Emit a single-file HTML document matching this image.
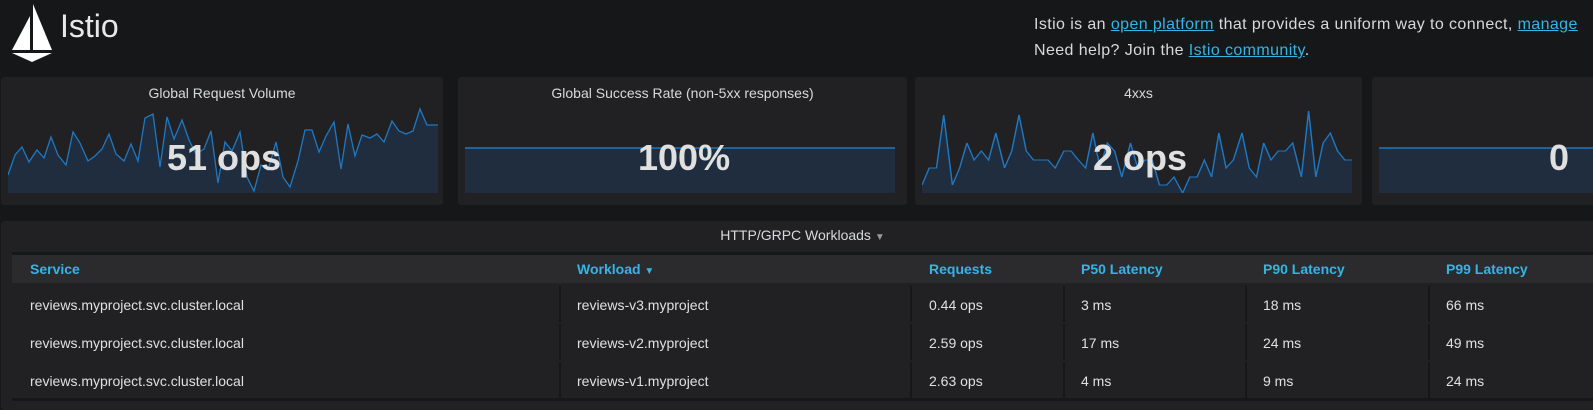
<!DOCTYPE html>
<html><head><style>
body{margin:0;width:1593px;height:410px;background:#161719;font-family:"Liberation Sans",sans-serif;color:#d8d9da;overflow:hidden;position:relative}
.a{position:absolute}
.panel{position:absolute;background:#212124;border-radius:3px;top:77px;height:128px}
.pt{position:absolute;top:8px;left:0;right:0;text-align:center;font-size:14px;color:#d8d9da}
.big{position:absolute;font-size:36px;font-weight:bold;color:#e0e0e0}
a{color:#33b5e5;text-decoration:underline}
.th{position:absolute;top:261px;font-size:14px;font-weight:bold;color:#33b5e5}
.row{position:absolute;left:12px;width:1581px;height:36px;background:#212124}
.cell{position:absolute;font-size:14px;color:#e0e0e0;top:11px}
.sep{position:absolute;top:0;width:2px;height:36px;background:#161719}
</style></head><body>
<svg class="a" style="left:10px;top:4px" width="44" height="60" viewBox="0 0 44 60"><polygon points="23,0 23,46 42,46" fill="#fff"/><polygon points="20,12 20,46 2,46" fill="#fff"/><polygon points="2,49 42,49 22,58" fill="#fff"/></svg>
<div class="a" style="left:60px;top:8px;font-size:32px;color:#e8e8e8">Istio</div>
<div class="a" style="left:1034px;top:12px;font-size:16px;line-height:26px;white-space:nowrap;letter-spacing:0.4px">Istio is an <a>open platform</a> that provides a uniform way to connect, <a>manage</a><br>Need help? Join the <a>Istio community</a>.</div>

<div class="panel" style="left:1px;width:442px"><div class="pt">Global Request Volume</div>
<svg class="a" style="left:7px;top:30px" width="430" height="86"><polygon fill="#1f2d3f" points="0,86 0,68 7,48 14,40 21,55 29,43 36,51 43,30 50,48 58,58 65,25 72,36 80,54 87,49 94,42 101,27 108,47 116,54 123,37 130,54 137,11 145,7 152,60 159,10 166,32 174,13 181,33 188,47 196,42 203,24 210,76 217,35 224,44 232,25 239,70 246,84 253,58 260,63 268,35 275,70 282,80 290,54 297,23 304,23 311,45 318,29 326,15 333,62 340,17 347,49 354,28 362,31 369,27 376,35 384,14 391,24 398,27 405,24 412,2 419,18 430,18 430,86"/><polyline fill="none" stroke="#1f78c1" stroke-width="1.3" points="0,68 7,48 14,40 21,55 29,43 36,51 43,30 50,48 58,58 65,25 72,36 80,54 87,49 94,42 101,27 108,47 116,54 123,37 130,54 137,11 145,7 152,60 159,10 166,32 174,13 181,33 188,47 196,42 203,24 210,76 217,35 224,44 232,25 239,70 246,84 253,58 260,63 268,35 275,70 282,80 290,54 297,23 304,23 311,45 318,29 326,15 333,62 340,17 347,49 354,28 362,31 369,27 376,35 384,14 391,24 398,27 405,24 412,2 419,18 430,18"/></svg>
<div class="big" style="left:166px;top:60px">51 ops</div></div>

<div class="panel" style="left:458px;width:449px"><div class="pt">Global Success Rate (non-5xx responses)</div>
<svg class="a" style="left:7px;top:70px" width="430" height="46"><rect y="1" width="430" height="45" fill="#1f2d3f"/><line x1="0" y1="1" x2="430" y2="1" stroke="#1f78c1" stroke-width="1.5"/></svg>
<div class="big" style="left:180px;top:60px">100%</div></div>

<div class="panel" style="left:915px;width:447px"><div class="pt">4xxs</div>
<svg class="a" style="left:7px;top:30px" width="430" height="86"><g transform="scale(1.448,1)"><polygon fill="#1f2d3f" points="0,86 0,78 5,61 10,61 15,8 21,78 26,61 31,36 36,53 41,44 46,53 51,26 57,61 62,44 67,8 72,44 77,53 82,53 87,53 92,61 98,44 103,44 108,53 113,61 118,26 123,61 128,36 133,44 138,70 144,36 149,61 154,53 159,53 164,78 169,78 174,70 180,86 185,70 190,70 195,53 200,70 205,26 210,61 215,53 221,26 226,61 231,70 236,36 241,53 246,44 251,44 256,36 262,70 267,4 272,70 277,36 282,26 287,44 292,53 297,53 297,86"/><polyline fill="none" stroke="#1f78c1" stroke-width="1" points="0,78 5,61 10,61 15,8 21,78 26,61 31,36 36,53 41,44 46,53 51,26 57,61 62,44 67,8 72,44 77,53 82,53 87,53 92,61 98,44 103,44 108,53 113,61 118,26 123,61 128,36 133,44 138,70 144,36 149,61 154,53 159,53 164,78 169,78 174,70 180,86 185,70 190,70 195,53 200,70 205,26 210,61 215,53 221,26 226,61 231,70 236,36 241,53 246,44 251,44 256,36 262,70 267,4 272,70 277,36 282,26 287,44 292,53 297,53"/></g></svg>
<div class="big" style="left:178px;top:60px">2 ops</div></div>

<div class="panel" style="left:1372px;width:230px">
<svg class="a" style="left:7px;top:70px" width="230" height="46"><rect y="1" width="230" height="45" fill="#1f2d3f"/><line x1="0" y1="1" x2="230" y2="1" stroke="#1f78c1" stroke-width="1.5"/></svg>
<div class="big" style="left:177px;top:60px">0</div></div>

<div class="a" style="left:1px;top:221px;width:1600px;height:189px;background:#212124;border-radius:3px"></div>
<div class="a" style="left:0;width:1593px;top:227px;text-align:center;font-size:14px;padding-left:6px">HTTP/GRPC Workloads <span style="color:#999;font-size:10px">▼</span></div>
<div class="a" style="left:12px;top:252px;width:1581px;height:3px;background:#161719"></div>
<div class="a" style="left:12px;top:255px;width:1581px;height:28px;background:#2b2b2e"></div>
<div class="th" style="left:30px">Service</div>
<div class="th" style="left:577px">Workload <span style="font-size:10px">▼</span></div>
<div class="th" style="left:929px">Requests</div>
<div class="th" style="left:1081px">P50 Latency</div>
<div class="th" style="left:1263px">P90 Latency</div>
<div class="th" style="left:1446px">P99 Latency</div>

<div class="row" style="top:286px"><div class="cell" style="left:18px">reviews.myproject.svc.cluster.local</div><div class="sep" style="left:547px"></div><div class="cell" style="left:565px">reviews-v3.myproject</div><div class="sep" style="left:898px"></div><div class="cell" style="left:917px">0.44 ops</div><div class="sep" style="left:1051px"></div><div class="cell" style="left:1069px">3 ms</div><div class="sep" style="left:1233px"></div><div class="cell" style="left:1251px">18 ms</div><div class="sep" style="left:1416px"></div><div class="cell" style="left:1434px">66 ms</div></div>
<div class="row" style="top:324px"><div class="cell" style="left:18px">reviews.myproject.svc.cluster.local</div><div class="sep" style="left:547px"></div><div class="cell" style="left:565px">reviews-v2.myproject</div><div class="sep" style="left:898px"></div><div class="cell" style="left:917px">2.59 ops</div><div class="sep" style="left:1051px"></div><div class="cell" style="left:1069px">17 ms</div><div class="sep" style="left:1233px"></div><div class="cell" style="left:1251px">24 ms</div><div class="sep" style="left:1416px"></div><div class="cell" style="left:1434px">49 ms</div></div>
<div class="row" style="top:362px"><div class="cell" style="left:18px">reviews.myproject.svc.cluster.local</div><div class="sep" style="left:547px"></div><div class="cell" style="left:565px">reviews-v1.myproject</div><div class="sep" style="left:898px"></div><div class="cell" style="left:917px">2.63 ops</div><div class="sep" style="left:1051px"></div><div class="cell" style="left:1069px">4 ms</div><div class="sep" style="left:1233px"></div><div class="cell" style="left:1251px">9 ms</div><div class="sep" style="left:1416px"></div><div class="cell" style="left:1434px">24 ms</div></div>
<div class="a" style="left:12px;top:398px;width:1581px;height:3px;background:#161719"></div>
</body></html>
